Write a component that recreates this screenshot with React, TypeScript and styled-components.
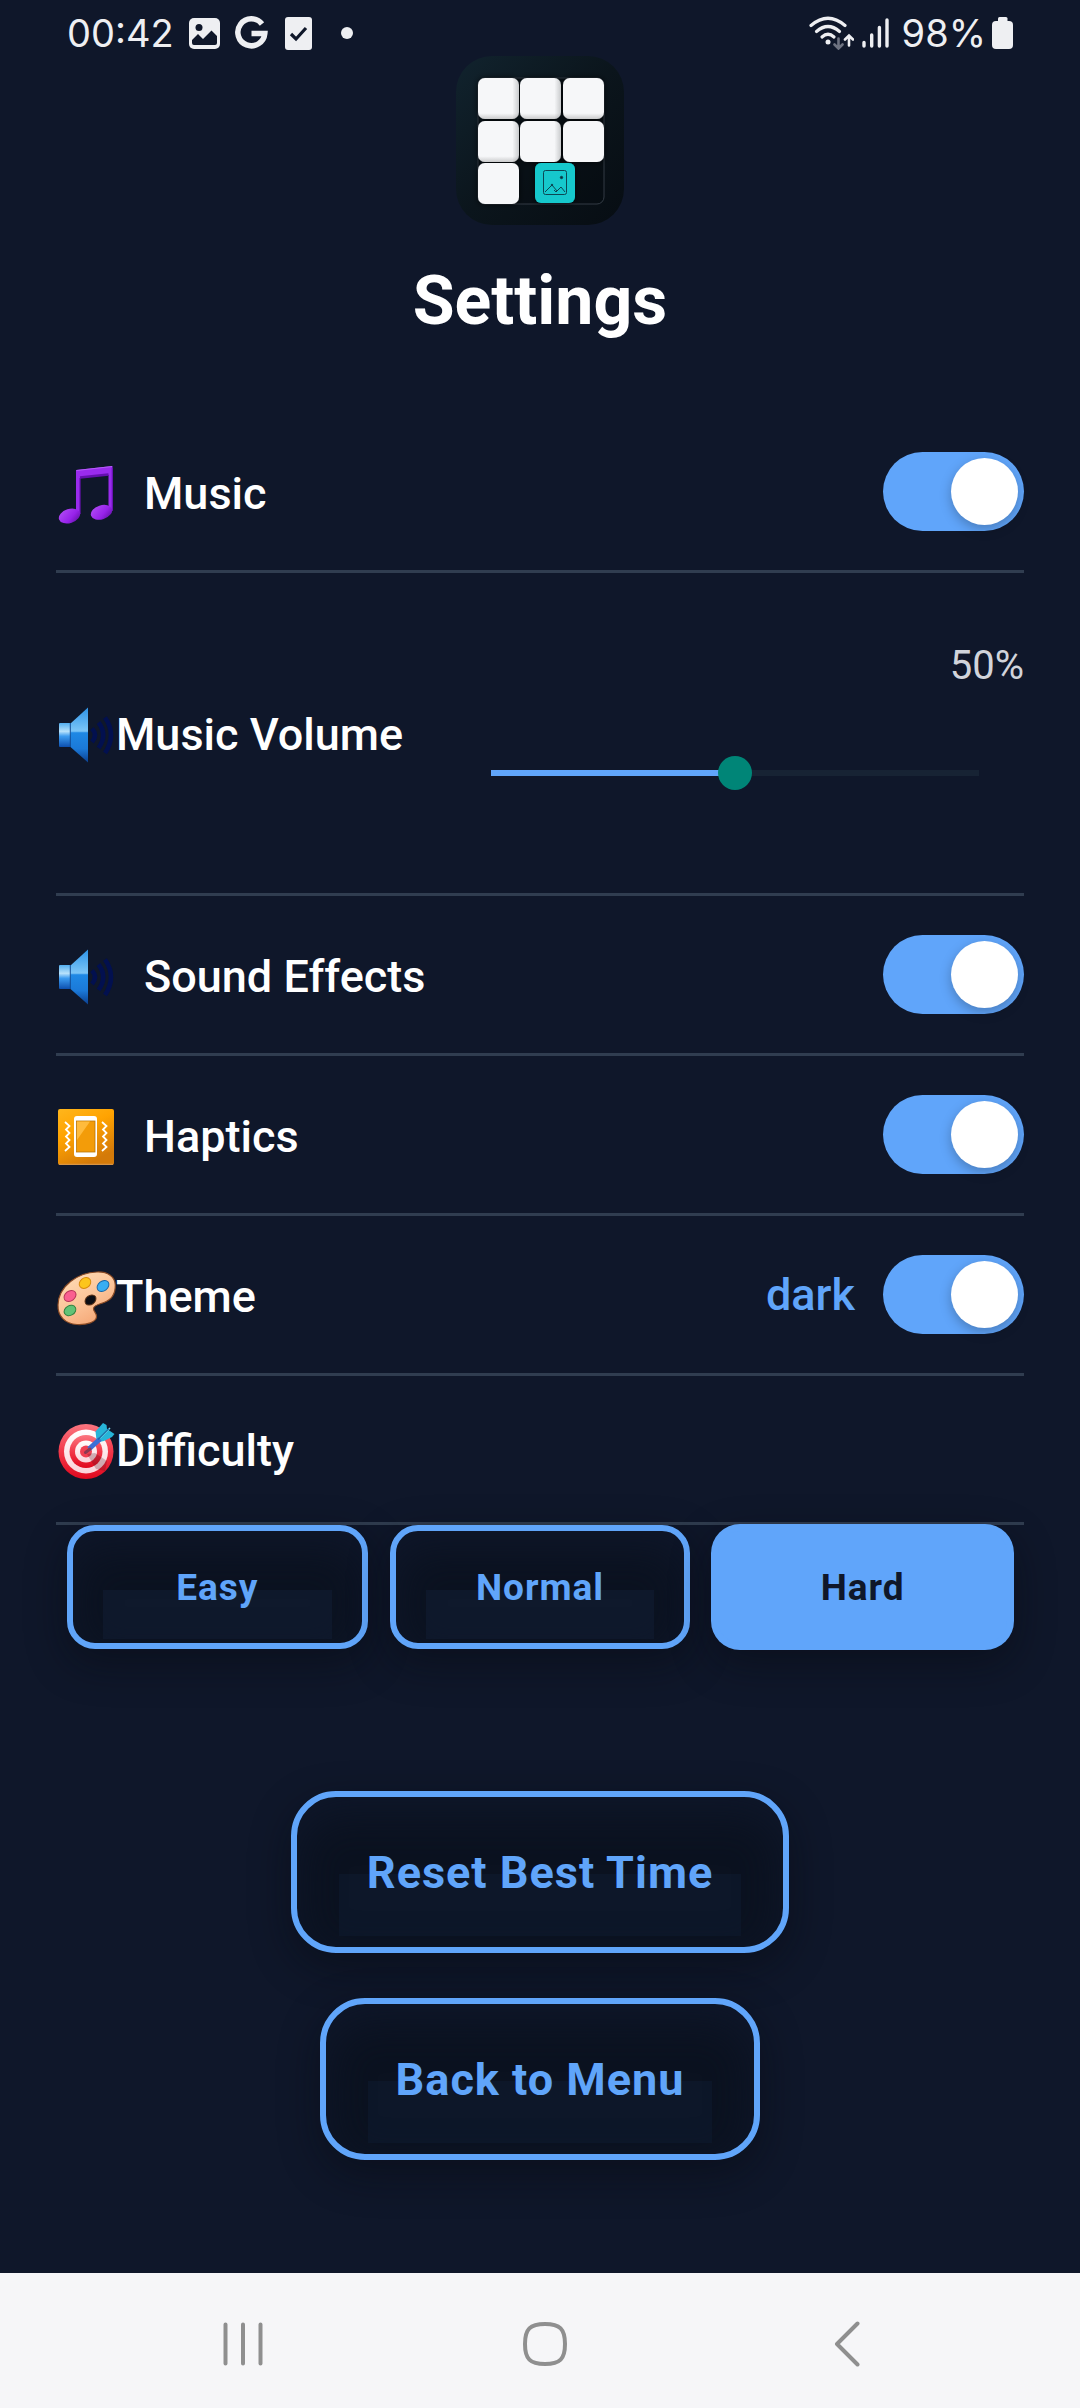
import React, { useState } from "react";
import styled, { createGlobalStyle } from "styled-components";

const color = {
  bg: "#0f172a",
  accent: "#60a5fa",
  text: "#ffffff",
  muted: "#d1d4db",
  line: "#303d50",
  track: "#172334",
  thumb: "#008577",
  status: "#eeeff2",
  nav: "#f6f6f8",
  navIcon: "#8f8f8f",
};

const GlobalStyle = createGlobalStyle`
  * { box-sizing: border-box; }
  body {
    margin: 0;
    background: ${color.bg};
    font-family: Roboto, "Liberation Sans", sans-serif;
  }
  button, input { font: inherit; margin: 0; }
`;

const Screen = styled.div`
  display: flex;
  flex-direction: column;
  min-height: 100vh;
  background: ${color.bg};
  color: ${color.text};
`;

const StatusBar = styled.header`
  display: flex;
  justify-content: space-between;
  align-items: center;
  height: 56px;
  padding: 10px 67px 0 67px;
  color: ${color.status};
  font-family: Inter, Roboto, sans-serif;
  font-size: 38px;
  font-weight: 400;
  line-height: 46px;
`;

const StatusGroup = styled.div<{ $gap: number }>`
  display: flex;
  align-items: center;
  gap: ${(p) => p.$gap}px;
`;

const Main = styled.main`
  flex: 1;
  display: flex;
  flex-direction: column;
  align-items: center;
  padding-bottom: 112px;
`;

const Title = styled.h1`
  margin: 36px 0 72px;
  font-size: 68px;
  line-height: 80px;
  font-weight: 700;
`;

const SettingsList = styled.section`
  align-self: stretch;
  padding: 0 56px;
`;

const Row = styled.div<{ $compact?: boolean }>`
  display: flex;
  align-items: center;
  justify-content: space-between;
  padding: ${(p) => (p.$compact ? 42 : 39)}px 0;
  border-bottom: 3px solid ${color.line};
`;

const Label = styled.label<{ $spaced?: boolean }>`
  display: flex;
  align-items: center;
  gap: ${(p) => (p.$spaced ? 30 : 2)}px;
  padding-top: 4px;
  font-size: 45px;
  line-height: 56px;
  font-weight: 500;
`;

const EmojiSvg = styled.svg`
  display: block;
  flex: none;
  width: 58px;
  height: 58px;
  overflow: visible;
`;

const RowEnd = styled.div`
  display: flex;
  align-items: center;
  gap: 28px;
`;

const ThemeName = styled.span`
  color: ${color.accent};
  font-size: 45px;
  line-height: 56px;
  font-weight: 500;
`;

const Toggle = styled.input.attrs({ type: "checkbox", role: "switch" })`
  appearance: none;
  display: flex;
  align-items: center;
  width: 141px;
  height: 79px;
  padding: 0 6px;
  border-radius: 40px;
  background: #334155;
  cursor: pointer;

  &::before {
    content: "";
    width: 67px;
    height: 67px;
    border-radius: 50%;
    background: #fff;
    box-shadow: 0 4px 12px rgba(0, 0, 0, 0.25);
  }
  &:checked {
    background: ${color.accent};
    justify-content: flex-end;
  }
`;

const VolumeControl = styled.div`
  display: flex;
  flex-direction: column;
  align-items: flex-end;
  flex: 0 1 578px;
  min-height: 242px;
  padding: 31px 0 25px;
`;

const VolumeValue = styled.output`
  color: ${color.muted};
  font-size: 40px;
  line-height: 46px;
`;

const SliderArea = styled.div`
  align-self: stretch;
  display: flex;
  align-items: center;
  height: 112px;
  margin-top: 28px;
  padding: 0 45px;
`;

const Slider = styled.input.attrs({ type: "range" })`
  appearance: none;
  flex: 1;
  min-width: 0;
  height: 34px;
  background: linear-gradient(${color.accent}, ${color.accent}) left center no-repeat,
    linear-gradient(${color.track}, ${color.track}) left center no-repeat;

  &::-webkit-slider-thumb {
    appearance: none;
    width: 34px;
    height: 34px;
    border: 0;
    border-radius: 50%;
    background: ${color.thumb};
  }
`;

const OutlineButton = styled.button`
  border: 6px solid ${color.accent};
  color: ${color.accent};
  font-weight: 700;
  letter-spacing: 1px;
  cursor: pointer;
  box-shadow: 0 14px 40px rgba(6, 8, 16, 0.45), inset 0 16px 44px ${color.bg};
`;

const DifficultyGroup = styled.div`
  align-self: stretch;
  display: grid;
  grid-template-columns: repeat(3, 1fr);
  gap: 22px;
  padding: 0 67px;
`;

const DifficultyButton = styled(OutlineButton)<{ $active: boolean }>`
  height: 124px;
  border-radius: 28px;
  font-size: 37px;
  background: linear-gradient(#0f192c, #0f192c) center bottom 4px / calc(100% - 60px) 49px no-repeat
    padding-box #0b1220;
  ${(p) =>
    p.$active &&
    `
    color: ${color.bg};
    background: ${color.accent};
    box-shadow: 0 0 0 1px ${color.accent}, 0 14px 40px rgba(6, 8, 16, 0.45);
  `}
`;

const Actions = styled.div`
  display: flex;
  flex-direction: column;
  align-items: center;
  gap: 45px;
  margin-top: 142px;
`;

const ActionButton = styled(OutlineButton)`
  height: 162px;
  padding: 0 70px;
  border-radius: 45px;
  font-size: 45px;
  background: linear-gradient(#0d1729, #0d1729) center bottom 11px / calc(100% - 84px) 62px no-repeat
    padding-box #0b1220;
`;

const NavBar = styled.nav`
  display: grid;
  grid-template-columns: repeat(3, 1fr);
  height: 135px;
  padding: 0 82px 0 92px;
  background: ${color.nav};
`;

const NavButton = styled.button`
  display: flex;
  align-items: center;
  justify-content: center;
  padding: 7px 0 0;
  border: 0;
  background: none;
  cursor: pointer;
`;

/* ---------- Drawings ---------- */

const Logo = () => (
  <svg width="168" height="169" viewBox="0 0 168 169" role="img" aria-label="Puzzle logo">
    <defs>
      <linearGradient id="logoBg" x1="0" y1="0" x2="1" y2="1">
        <stop offset="0" stopColor="#11232e" />
        <stop offset="0.5" stopColor="#0b151c" />
        <stop offset="1" stopColor="#070d13" />
      </linearGradient>
      <filter id="tileShade" x="-30%" y="-30%" width="160%" height="160%">
        <feDropShadow dx="0" dy="0" stdDeviation="3" floodColor="#000" floodOpacity="0.7" />
      </filter>
      <linearGradient id="tileRight" x1="0" y1="0" x2="1" y2="0">
        <stop offset="0.84" stopColor="#f6f7f9" />
        <stop offset="1" stopColor="#c9cbcd" />
      </linearGradient>
      <linearGradient id="tileDown" x1="0" y1="0" x2="0" y2="1">
        <stop offset="0.86" stopColor="#888" stopOpacity="0" />
        <stop offset="1" stopColor="#888" stopOpacity="0.4" />
      </linearGradient>
    </defs>
    <rect width="168" height="169" rx="36" fill="url(#logoBg)" />
    <rect x="22" y="22" width="126" height="126" rx="7" fill="#060a0f" fillOpacity="0.4" stroke="#333b45" />
    <g filter="url(#tileShade)">
      {[
        [22, 22], [64, 22], [107, 22],
        [22, 65], [64, 65], [107, 65],
        [22, 107],
      ].map(([x, y]) => (
        <g key={`${x}-${y}`}>
          <rect x={x} y={y} width="41" height="41" rx="7" fill={x < 100 && y < 100 ? "url(#tileRight)" : "#f6f7f9"} />
          {(y === 22 || (x === 22 && y === 65)) && (
            <rect x={x} y={y} width="41" height="41" rx="7" fill="url(#tileDown)" />
          )}
        </g>
      ))}
      <rect x="79" y="107" width="40" height="40" rx="6" fill="#14c8cc" />
    </g>
    <g fill="none" stroke="#0c4652" strokeWidth="1">
      <rect x="87.500" y="114.500" width="23" height="24" rx="2" />
      <path d="M89 136l7-7 5 6M98 134l2 2 5-5 4 5" />
      <circle cx="105.500" cy="121.500" r="1.200" fill="#0c2f3a" />
      <circle cx="96" cy="129" r="0.800" fill="#0c2f3a" />
    </g>
  </svg>
);

const NoteEmoji = () => (
  <EmojiSvg viewBox="0 0 58 58" aria-hidden="true">
    <defs>
      <linearGradient id="noteFill" x1="0" y1="0" x2="1" y2="1">
        <stop offset="0" stopColor="#b350f5" />
        <stop offset="0.6" stopColor="#9722ea" />
        <stop offset="1" stopColor="#5a0f9a" />
      </linearGradient>
    </defs>
    <path d="M20 5L56.500 1V46h-4V10L24 13v37h-4z" fill="#9a2bee" />
    <path d="M24 12.500L52.500 9.500" stroke="#640fae" strokeWidth="2.500" />
    <path d="M20.500 5.500L56 1.500" stroke="#b45cf8" strokeWidth="1" />
    <path d="M24 13v36M56.300 3v42" stroke="#6b12b6" strokeWidth="1.200" />
    <ellipse cx="13.500" cy="51" rx="11" ry="7" transform="rotate(-18 13.500 51)" fill="url(#noteFill)" />
    <ellipse cx="45.500" cy="47.300" rx="11" ry="7" transform="rotate(-18 45.500 47.300)" fill="url(#noteFill)" />
  </EmojiSvg>
);

const SpeakerEmoji = () => (
  <EmojiSvg viewBox="0 0 58 58" aria-hidden="true">
    <defs>
      <linearGradient id="coneFill" x1="0" y1="0" x2="0" y2="1">
        <stop offset="0" stopColor="#2d94e8" />
        <stop offset="0.43" stopColor="#7cc5f7" />
        <stop offset="0.46" stopColor="#1e88e5" />
        <stop offset="0.75" stopColor="#1b79d8" />
        <stop offset="1" stopColor="#0b3f8f" />
      </linearGradient>
      <linearGradient id="boxFill" x1="0" y1="0" x2="0" y2="1">
        <stop offset="0" stopColor="#53aeee" />
        <stop offset="0.35" stopColor="#b8e2fb" />
        <stop offset="0.55" stopColor="#3d9cf0" />
        <stop offset="1" stopColor="#0d4fae" />
      </linearGradient>
    </defs>
    <rect x="3" y="17" width="12" height="24" rx="1" fill="url(#boxFill)" />
    <path d="M14.500 17.500L32 1.500v55L14.500 41z" fill="url(#coneFill)" />
    <path d="M14.300 17v24" stroke="#114b95" />
    <g fill="none" stroke="#02104f" strokeWidth="4.600">
      <path d="M36 22.500Q42 29 36 36" />
      <path d="M42.500 16.500Q52 29 42.500 42" />
      <path d="M49 11.500Q61 29 49 47" />
    </g>
  </EmojiSvg>
);

const HapticsEmoji = () => (
  <EmojiSvg viewBox="0 0 58 58" aria-hidden="true">
    <defs>
      <linearGradient id="hapticFill" x1="0" y1="0" x2="0.500" y2="1">
        <stop offset="0" stopColor="#ffb61c" />
        <stop offset="0.45" stopColor="#ffa301" />
        <stop offset="1" stopColor="#d47a09" />
      </linearGradient>
    </defs>
    <rect x="2" y="1" width="56" height="56" rx="2" fill="url(#hapticFill)" />
    <path d="M3 56.300h54" stroke="#d99a52" />
    <rect x="18" y="8" width="23" height="41" rx="3" fill="#fff" />
    <rect x="20.500" y="13" width="18.500" height="31" fill="#f39c09" stroke="#b8770b" strokeWidth="0.800" />
    <path d="M21 13.500h13L21 32z" fill="#ffbb3d" />
    <g fill="none" stroke="#fff" strokeWidth="1.800">
      <path d="M9 14l4.500 4-3.500 3.500 3.500 3.500-3.500 3.500 3.500 3.500-3.500 3.500 3.500 3.500L9 43" />
      <path d="M46 14l4.500 4-3.500 3.500 3.500 3.500-3.500 3.500 3.500 3.500-3.500 3.500 3.500 3.500L46 43" />
    </g>
  </EmojiSvg>
);

const PaletteEmoji = () => (
  <EmojiSvg viewBox="0 0 58 58" aria-hidden="true">
    <defs>
      <linearGradient id="paletteFill" x1="0" y1="0" x2="0.600" y2="1">
        <stop offset="0" stopColor="#ffe0ba" />
        <stop offset="0.6" stopColor="#fcc499" />
        <stop offset="1" stopColor="#f5a877" />
      </linearGradient>
    </defs>
    <path
      d="M41 4C52 3.500 59 9 59.300 17C59.500 26 55 32 48 34.500C43 36.500 38 37 37.500 40.500C37.200 43.500 41 45 40.500 49C40 54 31 57 21 56.500C9 56 1.500 48 2 37C2.500 18 22 4.500 41 4z"
      fill="url(#paletteFill)"
      stroke="#8a4b25"
      strokeWidth="1.200"
    />
    <g strokeWidth="1">
      <ellipse cx="29" cy="15" rx="6.200" ry="5" transform="rotate(-38 29 15)" fill="#fcc51c" stroke="#d98a0a" />
      <ellipse cx="47" cy="18" rx="6.500" ry="4.800" transform="rotate(-38 47 18)" fill="#39aef2" stroke="#1565a8" />
      <ellipse cx="14" cy="28" rx="6.500" ry="5" transform="rotate(-38 14 28)" fill="#fa6090" stroke="#b53358" />
      <ellipse cx="14" cy="42.500" rx="6.200" ry="4.800" transform="rotate(-30 14 42.500)" fill="#62c276" stroke="#2f8240" />
      <ellipse cx="34.500" cy="32" rx="6" ry="4.500" transform="rotate(-38 34.500 32)" fill="#0c0d14" stroke="#5b3218" />
    </g>
  </EmojiSvg>
);

const TargetEmoji = () => (
  <EmojiSvg viewBox="0 0 58 58" aria-hidden="true">
    <defs>
      <linearGradient id="targetRed" x1="0" y1="0" x2="0" y2="1">
        <stop offset="0" stopColor="#fb7680" />
        <stop offset="0.5" stopColor="#f2384a" />
        <stop offset="1" stopColor="#e0081e" />
      </linearGradient>
      <linearGradient id="targetWhite" x1="0" y1="0" x2="0" y2="1">
        <stop offset="0" stopColor="#fff" />
        <stop offset="1" stopColor="#fbd3da" />
      </linearGradient>
    </defs>
    <circle cx="30" cy="29.500" r="27.500" fill="url(#targetRed)" />
    <circle cx="30" cy="29.500" r="22" fill="url(#targetWhite)" />
    <circle cx="30" cy="29.500" r="16.500" fill="url(#targetRed)" />
    <circle cx="30" cy="29.500" r="11" fill="url(#targetWhite)" />
    <circle cx="30" cy="29.500" r="6" fill="#f04052" />
    <path d="M31 32L39 31 51 39 49 49 40 47z" fill="#4a0a18" fillOpacity="0.25" />
    <path d="M40.500 18L39.500 9.500 47 1 50.500 3 51 7 58.500 12 56 15 48 19 43 20z" fill="#27b5d8" />
    <path d="M44 16L54 6" stroke="#8be9f5" strokeWidth="1.500" />
    <path d="M33 27L44 17" stroke="#3d6fd6" strokeWidth="5" />
    <path d="M42 17.500L53 6.500" stroke="#1a6fa6" strokeWidth="1.500" />
    <path d="M29.500 30.500L34 27" stroke="#8b3a52" strokeWidth="3" strokeLinecap="round" />
  </EmojiSvg>
);

const NotificationIcons = () => (
  <svg width="165" height="34" viewBox="0 0 165 34" aria-hidden="true">
    <rect x="0" y="2" width="31" height="31" rx="5" fill={color.status} />
    <circle cx="10" cy="11.500" r="3.500" fill={color.bg} />
    <path d="M3 24L9 18l5 5L22.500 14.500 28 20v7q0 2-2 2H5q-2 0-2-2z" fill={color.bg} />
    <path d="M73 8A13.500 13.500 0 1 0 75.800 17.500H62.500" fill="none" stroke={color.status} strokeWidth="5.500" />
    <rect x="96" y="1" width="27" height="33" rx="3" fill={color.status} />
    <path d="M102 18l5 5 10-11" fill="none" stroke={color.bg} strokeWidth="3.200" />
    <circle cx="158" cy="17" r="6" fill={color.status} />
  </svg>
);

const WifiIcon = () => (
  <svg width="45" height="34" viewBox="0 0 45 34" aria-hidden="true">
    <g fill="none" stroke={color.status} strokeWidth="3.200" strokeLinecap="round">
      <path d="M2 9.500Q19 -5 36 9.500" />
      <path d="M7.500 15.500Q19 5.500 30.500 15.500" />
      <path d="M13 21Q19 15.500 25 21" />
      <path d="M40 29.500V20M36 23.500L40 19.500 44 23.500" strokeWidth="2.600" />
      <path d="M29.500 22.500V32M25.500 28.500L29.500 32.500 33.500 28.500" stroke="#6d7280" strokeWidth="2.600" />
    </g>
    <circle cx="19" cy="26" r="2.500" fill={color.status} />
  </svg>
);

const SignalIcon = () => (
  <svg width="27" height="30" viewBox="0 0 27 30" aria-hidden="true">
    <path d="M2 24.500V28M9.700 17V28M17.400 9.500V28M25 2V28" stroke={color.status} strokeWidth="3.400" strokeLinecap="round" />
  </svg>
);

const BatteryIcon = () => (
  <svg width="21" height="32" viewBox="0 0 21 32" aria-hidden="true">
    <rect x="6" y="0" width="9.500" height="6" rx="1.500" fill={color.status} />
    <rect x="0" y="4" width="21" height="28" rx="4" fill={color.status} />
  </svg>
);

/* ---------- Screen ---------- */

type ToggleRowProps = {
  id: string;
  icon: React.ReactNode;
  text: string;
  spaced?: boolean;
  checked: boolean;
  onChange: (value: boolean) => void;
  children?: React.ReactNode;
};

const ToggleRow = ({ id, icon, text, spaced, checked, onChange, children }: ToggleRowProps) => (
  <Row>
    <Label htmlFor={id} $spaced={spaced}>
      {icon}
      {text}
    </Label>
    <RowEnd>
      {children}
      <Toggle id={id} checked={checked} onChange={(e) => onChange(e.target.checked)} />
    </RowEnd>
  </Row>
);

const levels = ["Easy", "Normal", "Hard"];

export default function App() {
  const [music, setMusic] = useState(true);
  const [volume, setVolume] = useState(50);
  const [sound, setSound] = useState(true);
  const [haptics, setHaptics] = useState(true);
  const [dark, setDark] = useState(true);
  const [level, setLevel] = useState("Hard");

  return (
    <Screen>
      <GlobalStyle />
      <StatusBar>
        <StatusGroup $gap={15}>
          <span>00:42</span>
          <NotificationIcons />
        </StatusGroup>
        <StatusGroup $gap={13}>
          <StatusGroup $gap={8}>
            <WifiIcon />
            <SignalIcon />
          </StatusGroup>
          <StatusGroup $gap={6}>
            <span>98%</span>
            <BatteryIcon />
          </StatusGroup>
        </StatusGroup>
      </StatusBar>

      <Main>
        <Logo />
        <Title>Settings</Title>

        <SettingsList>
          <ToggleRow id="music" icon={<NoteEmoji />} text="Music" spaced checked={music} onChange={setMusic} />
          <Row>
            <Label htmlFor="volume">
              <SpeakerEmoji />
              Music Volume
            </Label>
            <VolumeControl>
              <VolumeValue htmlFor="volume">{volume}%</VolumeValue>
              <SliderArea>
                <Slider
                  id="volume"
                  min={0}
                  max={100}
                  value={volume}
                  onChange={(e) => setVolume(Number(e.target.value))}
                  style={{ backgroundSize: `${volume}% 6px, 100% 6px` }}
                />
              </SliderArea>
            </VolumeControl>
          </Row>
          <ToggleRow id="sound" icon={<SpeakerEmoji />} text="Sound Effects" spaced checked={sound} onChange={setSound} />
          <ToggleRow id="haptics" icon={<HapticsEmoji />} text="Haptics" spaced checked={haptics} onChange={setHaptics} />
          <ToggleRow id="theme" icon={<PaletteEmoji />} text="Theme" checked={dark} onChange={setDark}>
            <ThemeName>{dark ? "dark" : "light"}</ThemeName>
          </ToggleRow>
          <Row $compact>
            <Label as="div" id="difficulty">
              <TargetEmoji />
              Difficulty
            </Label>
          </Row>
        </SettingsList>

        <DifficultyGroup role="group" aria-labelledby="difficulty">
          {levels.map((name) => (
            <DifficultyButton
              key={name}
              type="button"
              $active={name === level}
              aria-pressed={name === level}
              onClick={() => setLevel(name)}
            >
              {name}
            </DifficultyButton>
          ))}
        </DifficultyGroup>

        <Actions>
          <ActionButton type="button">Reset Best Time</ActionButton>
          <ActionButton type="button">Back to Menu</ActionButton>
        </Actions>
      </Main>

      <NavBar>
        <NavButton type="button" aria-label="Recent apps">
          <svg width="40" height="44" viewBox="0 0 40 44" fill="none" stroke={color.navIcon} strokeWidth="4" strokeLinecap="round">
            <path d="M2.500 2.500V41.500M20 2.500V41.500M37.500 2.500V41.500" />
          </svg>
        </NavButton>
        <NavButton type="button" aria-label="Home">
          <svg width="44" height="44" viewBox="0 0 44 44" fill="none" stroke={color.navIcon} strokeWidth="4">
            <path d="M22 2C37 2 42 7 42 22S37 42 22 42 2 37 2 22 7 2 22 2z" />
          </svg>
        </NavButton>
        <NavButton type="button" aria-label="Back">
          <svg width="26" height="46" viewBox="0 0 26 46" fill="none" stroke={color.navIcon} strokeWidth="4" strokeLinecap="round" strokeLinejoin="round">
            <path d="M23.500 2.500L3 23 23.500 43.500" />
          </svg>
        </NavButton>
      </NavBar>
    </Screen>
  );
}
